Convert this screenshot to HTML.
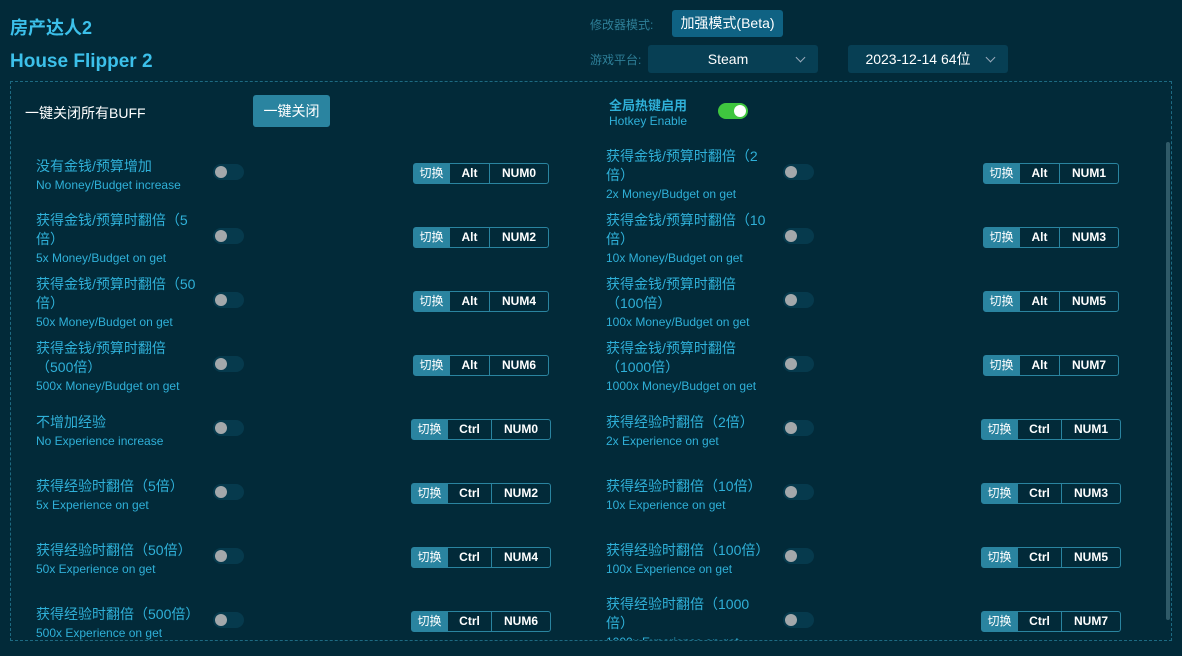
<!DOCTYPE html>
<html><head><meta charset="utf-8"><style>
*{margin:0;padding:0;box-sizing:border-box}
body{width:1182px;height:656px;background:#022a39;font-family:"Liberation Sans","Noto Sans CJK SC",sans-serif;position:relative;overflow:hidden;color:#2fb0d8}
.a{position:absolute}
.t1{left:10px;top:14px;font-size:18px;font-weight:bold;color:#3cc0ea}
.t2{left:10px;top:51px;font-size:19px;font-weight:bold;color:#3cc0ea}
.lbl{font-size:12px;color:#2e7f98}
.sel{background:#073f54;border-radius:3px;color:#fff;font-size:14px;text-align:center;line-height:28px;height:28px}
.chev{position:absolute;right:14px;top:9px;width:7px;height:7px;border-right:1.5px solid #9ab;border-bottom:1.5px solid #9ab;transform:rotate(45deg)}
.box{left:10px;top:81px;width:1162px;height:560px;border:1px dashed #1d6a82;overflow:hidden}
.row{position:absolute;height:64px;display:flex;flex-direction:column;justify-content:center;width:180px}
.cn{font-size:14px;line-height:19px;color:#2fb0d8}
.en{font-size:12px;line-height:18px;color:#2fb0d8}
.tg{position:absolute;width:31px;height:16px;border-radius:8px;background:#063a4d}
.tg:after{content:"";position:absolute;left:2px;top:2px;width:12px;height:12px;border-radius:6px;background:#a3a8ab}
.keys{position:absolute;height:21px;display:flex;border:1px solid #2a84a0;border-radius:3px;font-size:12px;color:#fff;font-weight:bold;line-height:19px}
.keys span{text-align:center;border-left:1px solid #2a84a0}
.keys span:first-child{background:#2a84a0;border:none;font-weight:normal}
</style></head><body>
<div class="a t1">房产达人2</div>
<div class="a t2">House Flipper 2</div>
<div class="a lbl" style="left:590px;top:16px">修改器模式:</div>
<div class="a" style="left:672px;top:10px;width:111px;height:27px;background:#0f6283;border-radius:3px;color:#fff;font-size:14px;line-height:27px;text-align:center">加强模式(Beta)</div>
<div class="a lbl" style="left:590px;top:51px">游戏平台:</div>
<div class="a sel" style="left:648px;top:45px;width:170px;padding-right:10px">Steam<i class="chev"></i></div>
<div class="a sel" style="left:848px;top:45px;width:160px;padding-right:20px">2023-12-14 64位<i class="chev"></i></div>
<div class="a box"></div>
<div class="a" style="left:25px;top:103px;font-size:14px;color:#fff">一键关闭所有BUFF</div>
<div class="a" style="left:253px;top:95px;width:77px;height:32px;background:#2a84a0;border-radius:3px;color:#fff;font-size:14px;line-height:32px;text-align:center">一键关闭</div>
<div class="a" style="left:609px;top:95px;font-size:13px;font-weight:bold;color:#2fb0d8">全局热键启用</div>
<div class="a" style="left:609px;top:114px;font-size:12px;color:#2fb0d8">Hotkey Enable</div>
<div class="a" style="left:718px;top:103px;width:30px;height:16px;border-radius:8px;background:#3fc63f"><div style="position:absolute;right:2px;top:2px;width:12px;height:12px;border-radius:6px;background:#fff"></div></div>
<div class="a" style="left:1166px;top:142px;width:4px;height:478px;background:#2f5a68;border-radius:2px"></div>
<div class="a" style="left:0;top:0;width:1182px;height:640px;overflow:hidden" id="c">
<div class="row" style="left:36px;top:143px"><div class="cn">没有金钱/预算增加</div><div class="en">No Money/Budget increase</div></div>
<div class="row" style="left:36px;top:207px"><div class="cn">获得金钱/预算时翻倍（5<br>倍）</div><div class="en">5x Money/Budget on get</div></div>
<div class="row" style="left:36px;top:271px"><div class="cn">获得金钱/预算时翻倍（50<br>倍）</div><div class="en">50x Money/Budget on get</div></div>
<div class="row" style="left:36px;top:335px"><div class="cn">获得金钱/预算时翻倍<br>（500倍）</div><div class="en">500x Money/Budget on get</div></div>
<div class="row" style="left:36px;top:399px"><div class="cn">不增加经验</div><div class="en">No Experience increase</div></div>
<div class="row" style="left:36px;top:463px"><div class="cn">获得经验时翻倍（5倍）</div><div class="en">5x Experience on get</div></div>
<div class="row" style="left:36px;top:527px"><div class="cn">获得经验时翻倍（50倍）</div><div class="en">50x Experience on get</div></div>
<div class="row" style="left:36px;top:591px"><div class="cn">获得经验时翻倍（500倍）</div><div class="en">500x Experience on get</div></div>

<div class="row" style="left:606px;top:143px"><div class="cn">获得金钱/预算时翻倍（2<br>倍）</div><div class="en">2x Money/Budget on get</div></div>
<div class="row" style="left:606px;top:207px"><div class="cn">获得金钱/预算时翻倍（10<br>倍）</div><div class="en">10x Money/Budget on get</div></div>
<div class="row" style="left:606px;top:271px"><div class="cn">获得金钱/预算时翻倍<br>（100倍）</div><div class="en">100x Money/Budget on get</div></div>
<div class="row" style="left:606px;top:335px"><div class="cn">获得金钱/预算时翻倍<br>（1000倍）</div><div class="en">1000x Money/Budget on get</div></div>
<div class="row" style="left:606px;top:399px"><div class="cn">获得经验时翻倍（2倍）</div><div class="en">2x Experience on get</div></div>
<div class="row" style="left:606px;top:463px"><div class="cn">获得经验时翻倍（10倍）</div><div class="en">10x Experience on get</div></div>
<div class="row" style="left:606px;top:527px"><div class="cn">获得经验时翻倍（100倍）</div><div class="en">100x Experience on get</div></div>
<div class="row" style="left:606px;top:591px"><div class="cn">获得经验时翻倍（1000<br>倍）</div><div class="en">1000x Experience on get</div></div>

<div class="tg" style="left:213px;top:164px"></div><div class="tg" style="left:213px;top:228px"></div><div class="tg" style="left:213px;top:292px"></div><div class="tg" style="left:213px;top:356px"></div><div class="tg" style="left:213px;top:420px"></div><div class="tg" style="left:213px;top:484px"></div><div class="tg" style="left:213px;top:548px"></div><div class="tg" style="left:213px;top:612px"></div>
<div class="tg" style="left:783px;top:164px"></div><div class="tg" style="left:783px;top:228px"></div><div class="tg" style="left:783px;top:292px"></div><div class="tg" style="left:783px;top:356px"></div><div class="tg" style="left:783px;top:420px"></div><div class="tg" style="left:783px;top:484px"></div><div class="tg" style="left:783px;top:548px"></div><div class="tg" style="left:783px;top:612px"></div>

<div class="keys" style="left:413px;top:163px"><span style="width:35px">切换</span><span style="width:40px">Alt</span><span style="width:59px">NUM0</span></div>
<div class="keys" style="left:413px;top:227px"><span style="width:35px">切换</span><span style="width:40px">Alt</span><span style="width:59px">NUM2</span></div>
<div class="keys" style="left:413px;top:291px"><span style="width:35px">切换</span><span style="width:40px">Alt</span><span style="width:59px">NUM4</span></div>
<div class="keys" style="left:413px;top:355px"><span style="width:35px">切换</span><span style="width:40px">Alt</span><span style="width:59px">NUM6</span></div>
<div class="keys" style="left:411px;top:419px"><span style="width:35px">切换</span><span style="width:44px">Ctrl</span><span style="width:59px">NUM0</span></div>
<div class="keys" style="left:411px;top:483px"><span style="width:35px">切换</span><span style="width:44px">Ctrl</span><span style="width:59px">NUM2</span></div>
<div class="keys" style="left:411px;top:547px"><span style="width:35px">切换</span><span style="width:44px">Ctrl</span><span style="width:59px">NUM4</span></div>
<div class="keys" style="left:411px;top:611px"><span style="width:35px">切换</span><span style="width:44px">Ctrl</span><span style="width:59px">NUM6</span></div>
<div class="keys" style="left:983px;top:163px"><span style="width:35px">切换</span><span style="width:40px">Alt</span><span style="width:59px">NUM1</span></div>
<div class="keys" style="left:983px;top:227px"><span style="width:35px">切换</span><span style="width:40px">Alt</span><span style="width:59px">NUM3</span></div>
<div class="keys" style="left:983px;top:291px"><span style="width:35px">切换</span><span style="width:40px">Alt</span><span style="width:59px">NUM5</span></div>
<div class="keys" style="left:983px;top:355px"><span style="width:35px">切换</span><span style="width:40px">Alt</span><span style="width:59px">NUM7</span></div>
<div class="keys" style="left:981px;top:419px"><span style="width:35px">切换</span><span style="width:44px">Ctrl</span><span style="width:59px">NUM1</span></div>
<div class="keys" style="left:981px;top:483px"><span style="width:35px">切换</span><span style="width:44px">Ctrl</span><span style="width:59px">NUM3</span></div>
<div class="keys" style="left:981px;top:547px"><span style="width:35px">切换</span><span style="width:44px">Ctrl</span><span style="width:59px">NUM5</span></div>
<div class="keys" style="left:981px;top:611px"><span style="width:35px">切换</span><span style="width:44px">Ctrl</span><span style="width:59px">NUM7</span></div>
</div>
</body></html>
